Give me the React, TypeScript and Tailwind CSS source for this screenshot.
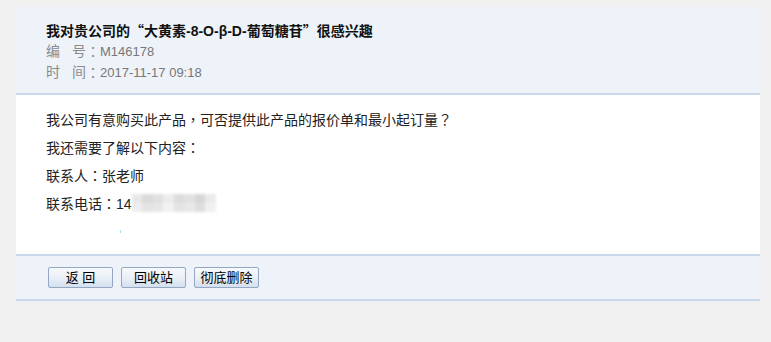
const FONT = "font-['Liberation_Sans','Noto_Sans_CJK_SC',sans-serif]";

const blurCells = [
  '#e8e8e8', '#dadada', '#e0e0e0', '#ececec', '#dcdcdc', '#e2e2e2', '#d6d6d6', '#eaeaea',
  '#eeeeee', '#e4e4e4', '#e6e6e6', '#f2f2f2', '#e3e3e3', '#e8e8e8', '#dedede', '#f0f0f0',
];

// centred full-width punctuation, as in the original page
function P({ children }: { children: React.ReactNode }) {
  return <span className="font-['Noto_Sans_CJK_TC',sans-serif]">{children}</span>;
}

function Button({ children }: { children: React.ReactNode }) {
  return (
    <button className="h-[21px] w-[65px] rounded-[2px] border border-[#93a7c2] bg-gradient-to-b from-[#f7f9fc] via-[#eaf0f7] to-[#d3e0ee] text-[13px] leading-[19px] text-black">
      {children}
    </button>
  );
}

export default function App() {
  return (
    <div className={`min-h-[342px] w-[771px] bg-[#f0f0f0] pt-[7px] pr-[11px] pl-4 ${FONT}`}>
      <div className="flex flex-col">
        <div className="bg-[#eef3fa] pt-[13px] pb-[10px] pl-[30px] text-[14px] leading-[21px]">
          <div className="h-[21px] font-bold text-[#111]">
            我对贵公司的<span className="font-['Noto_Sans_CJK_SC',sans-serif]">“</span>大黄素-8-O-β-D-葡萄糖苷<span className="font-['Noto_Sans_CJK_SC',sans-serif]">”</span>很感兴趣
          </div>
          <div className="flex h-[21px] text-[#8a8a8a]">
            <span>编</span>
            <span className="ml-[12px]">号</span>
            <P>：</P>
            <span className="text-[13px] text-[#777]">M146178</span>
          </div>
          <div className="flex h-[21px] text-[#8a8a8a]">
            <span>时</span>
            <span className="ml-[12px]">间</span>
            <P>：</P>
            <span className="text-[13px] text-[#777]">2017-11-17 09:18</span>
          </div>
        </div>
        <div className="border-y-2 border-[#c9d8ea] bg-white pt-[10px] pb-[37px] pl-[30px] text-[14px] leading-[28px] text-[#222]">
          <div className="h-[28px]">
            我公司有意购买此产品<P>，</P>可否提供此产品的报价单和最小起订量<P>？</P>
          </div>
          <div className="h-[28px]">
            我还需要了解以下内容<P>：</P>
          </div>
          <div className="h-[28px]">
            联系人<P>：</P>张老师
          </div>
          <div className="flex h-[28px] items-center">
            <span>
              联系电话<P>：</P>14
            </span>
            <span className="flex h-[18px] w-[84px] flex-wrap overflow-hidden blur-[1.5px]">
              {blurCells.map((c, i) => (
                <span key={i} className="h-[9px] w-[10.5px]" style={{ backgroundColor: c }} />
              ))}
            </span>
          </div>
          <div className="relative h-0">
            <span className="absolute top-[13px] left-[74px] h-[3px] w-px bg-[#9fe3f0]" />
          </div>
        </div>
        <div className="flex gap-2 border-b-2 border-[#c9d8ea] bg-[#eef3fa] pt-[11px] pb-[11px] pl-8">
          <Button>返 回</Button>
          <Button>回收站</Button>
          <Button>彻底删除</Button>
        </div>
      </div>
    </div>
  );
}
